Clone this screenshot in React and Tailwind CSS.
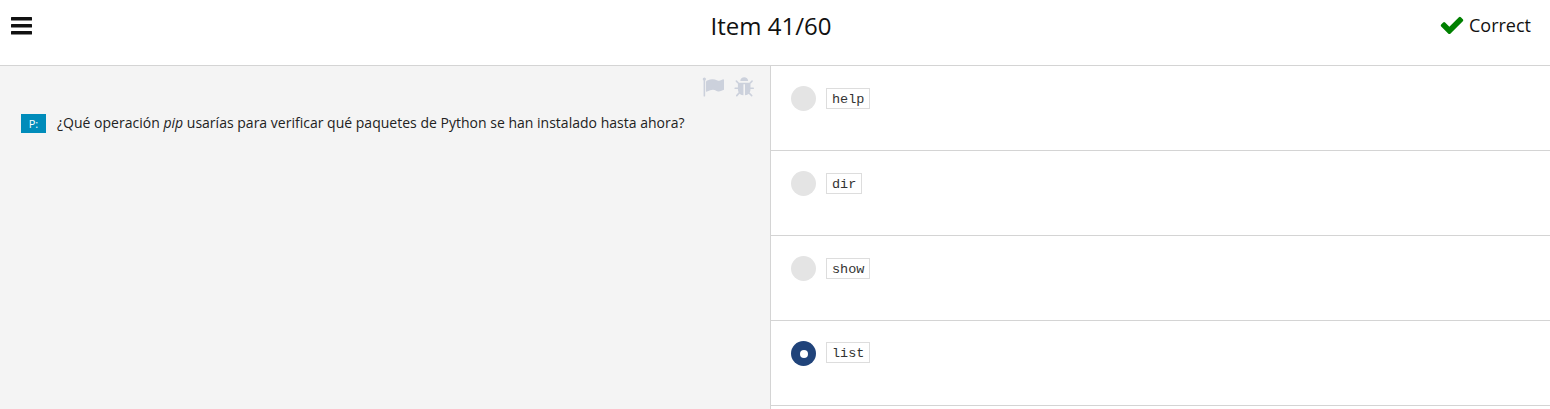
const options = [
  { label: "help", selected: false },
  { label: "dir", selected: false },
  { label: "show", selected: false },
  { label: "list", selected: true },
];

function BarsIcon({ className }) {
  return (
    <svg viewBox="0 0 21 18" className={className} fill="currentColor" aria-hidden="true">
      <rect width="21" height="3.4" rx="0.5" />
      <rect y="7" width="21" height="3.4" rx="0.5" />
      <rect y="14" width="21" height="3.4" rx="0.5" />
    </svg>
  );
}

function CheckIcon({ className }) {
  return (
    <svg viewBox="0 0 1792 1792" className={className} fill="currentColor" aria-hidden="true">
      <path d="M1671 566q0 40-28 68l-724 724-136 136q-28 28-68 28t-68-28l-136-136-362-362q-28-28-28-68t28-68l136-136q28-28 68-28t68 28l294 295 656-657q28-28 68-28t68 28l136 136q28 28 28 68z" />
    </svg>
  );
}

function FlagIcon({ className }) {
  return (
    <svg viewBox="0 0 1792 1792" className={className} fill="currentColor" aria-hidden="true">
      <path d="M320 256q0 72-64 110v1266q0 13-9.5 22.5t-22.5 9.5h-64q-13 0-22.5-9.5t-9.5-22.5v-1266q-64-38-64-110 0-53 37.5-90.5t90.5-37.5 90.5 37.5 37.5 90.5zm1472 64v763q0 25-12.5 38.5t-39.5 27.5q-215 116-369 116-61 0-123.5-22t-108.5-48-115.5-48-142.5-22q-192 0-464 146-17 9-33 9-26 0-45-19t-19-45v-742q0-32 31-55 21-14 79-43 236-120 421-120 107 0 200 29t219 88q38 19 88 19 54 0 117.5-21t110-47 88-47 54.5-21q26 0 45 19t19 45z" />
    </svg>
  );
}

function BugIcon({ className }) {
  return (
    <svg viewBox="0 0 1792 1792" className={className} fill="currentColor" aria-hidden="true">
      <path d="M1632 992q0 26-19 45t-45 19h-224q0 171-67 290l208 209q19 19 19 45t-19 45q-18 19-45 19t-45-19l-198-197q-5 5-15 13t-42 28.500-65 36.500-82 29-97 13v-896h-128v896q-51 0-101.500-13.500t-87-33-66-39-43.500-32.500l-15-14-183 207q-20 21-48 21-24 0-43-16-19-18-20.500-44.500t15.500-46.500l202-227q-58-114-58-274h-224q-26 0-45-19t-19-45 19-45 45-19h224v-294l-173-173q-19-19-19-45t19-45 45-19 45 19l173 173h844l173-173q19-19 45-19t45 19 19 45-19 45l-173 173v294h224q26 0 45 19t19 45zm-480-576h-640q0-133 93.500-226.500t226.500-93.500 226.500 93.500 93.500 226.500z" />
    </svg>
  );
}

function Option({ label, selected }) {
  return (
    <li className="flex h-[85px] items-start border-b border-[#d4d4d4] pt-5 pl-5">
      <span className={selected ? "flex size-[25px] items-center justify-center rounded-full bg-[#20437a]" : "size-[25px] rounded-full bg-[#e4e4e4]"}>
        {selected && <span className="size-2 rounded-full bg-white" />}
      </span>
      <code className={`${selected ? "mt-px" : "mt-0.5"} ml-2.5 flex h-[21px] items-center border border-[#dddddd] px-[5px] pt-0.5 font-['Courier_New','Liberation_Mono',monospace] text-[13.5px] leading-none text-[#333333]`}>
        {label}
      </code>
    </li>
  );
}

export default function App() {
  return (
    <div className="flex h-[409px] w-full flex-col overflow-hidden bg-white font-['Open_Sans',sans-serif] text-[#222222]">
      <header className="grid h-[66px] shrink-0 grid-cols-3 items-start border-b border-[#d4d4d4]">
        <BarsIcon className="mt-[17px] ml-[11px] h-[18px] w-[21px] text-[#111111]" />
        <h1 className="mt-[9px] pr-2 text-center text-2xl leading-[34px] text-[#111111]">Item 41/60</h1>
        <div className="mt-3 mr-[19px] flex items-center justify-end gap-1 text-lg leading-[26px] text-[#111111]">
          <CheckIcon className="size-[26px] text-[#008000]" />
          <span>Correct</span>
        </div>
      </header>
      <main className="flex min-h-0 flex-1">
        <section className="w-[771px] shrink-0 border-r border-[#d4d4d4] bg-[#f4f4f4]">
          <div className="flex h-[42px] justify-end gap-2.5 pt-2.5 pr-3.5 text-[#ccd1dc]">
            <FlagIcon className="size-[22px]" />
            <BugIcon className="size-[22px]" />
          </div>
          <div className="flex items-center pt-[5px] pl-[21px]">
            <span className="flex h-[19px] w-[25px] items-center justify-center bg-[#008cba] pt-0.5 text-[11px] text-white">P:</span>
            <p className="ml-[11px] text-sm leading-5 tracking-[0.01px] whitespace-nowrap">
              ¿Qué operación <em>pip</em> usarías para verificar qué paquetes de Python se han instalado hasta ahora?
            </p>
          </div>
        </section>
        <ul className="flex-1">
          {options.map((option) => (
            <Option key={option.label} {...option} />
          ))}
        </ul>
      </main>
    </div>
  );
}
